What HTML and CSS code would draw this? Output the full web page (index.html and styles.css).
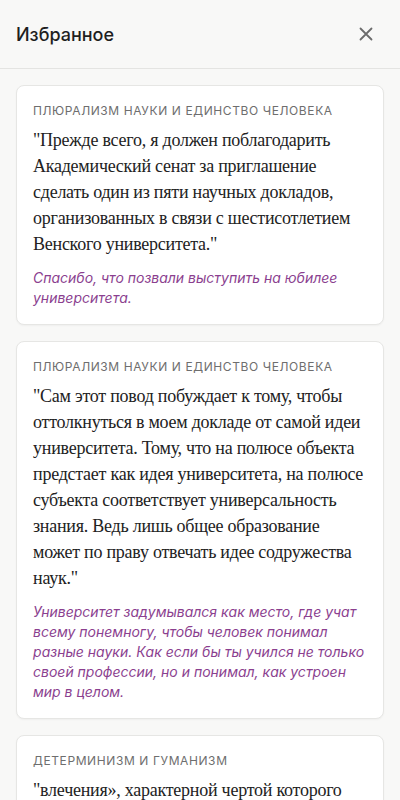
FILE: index.html
```html
<!DOCTYPE html>
<html lang="ru">
<head>
<meta charset="utf-8">
<title>Избранное</title>
<link rel="stylesheet" href="styles.css">
</head>
<body>
<div class="panel">
  <header class="header">
    <h1 class="title">Избранное</h1>
    <button class="close" aria-label="Закрыть">
      <svg width="14" height="14" viewBox="0 0 14 14"><path d="M1.5 1.5 L12.5 12.5 M12.5 1.5 L1.5 12.5" stroke="#6b6b6b" stroke-width="1.8" stroke-linecap="round" fill="none"/></svg>
    </button>
  </header>
  <main class="list">
    <article class="card">
      <div class="topic">Плюрализм науки и единство человека</div>
      <p class="quote">"Прежде всего, я должен поблагодарить Академический сенат за приглашение сделать один из пяти научных докладов, организованных в связи с шестисотлетием Венского университета."</p>
      <p class="note">Спасибо, что позвали выступить на юбилее университета.</p>
    </article>
    <article class="card">
      <div class="topic">Плюрализм науки и единство человека</div>
      <p class="quote">"Сам этот повод побуждает к тому, чтобы оттолкнуться в моем докладе от самой идеи университета. Тому, что на полюсе объекта предстает как идея университета, на полюсе субъекта соответствует универсальность знания. Ведь лишь общее образование может по праву отвечать идее содружества наук."</p>
      <p class="note">Университет задумывался как место, где учат всему понемногу, чтобы человек понимал разные науки. Как если бы ты учился не только своей профессии, но и понимал, как устроен мир в целом.</p>
    </article>
    <article class="card">
      <div class="topic">Детерминизм и гуманизм</div>
      <p class="quote">"влечения», характерной чертой которого является то, что оно толкает человека к определенной цели."</p>
    </article>
  </main>
</div>
</body>
</html>
```
FILE: styles.css
```css
* { box-sizing: border-box; }
html, body { margin: 0; padding: 0; }
body {
  background: #f8f8f7;
  font-family: Inter, "Noto Sans", sans-serif;
  color: #222;
  height: 800px;
  overflow: hidden;
}
.panel { display: flex; flex-direction: column; }
.header {
  height: 69px;
  display: flex;
  align-items: center;
  justify-content: space-between;
  padding: 0 16px;
  border-bottom: 1px solid #e4e4e2;
}
.title {
  margin: 0;
  font-size: 18px;
  font-weight: 500;
  color: #1f1f1f;
}
.close {
  border: 0;
  background: none;
  padding: 0;
  width: 24px;
  height: 24px;
  display: flex;
  align-items: center;
  justify-content: center;
  margin-right: 6px;
}
.list {
  display: flex;
  flex-direction: column;
  gap: 16px;
  padding: 16px;
}
.card {
  background: #fff;
  border: 1px solid #e6e6e4;
  border-radius: 8px;
  box-shadow: 0 1px 2px rgba(0,0,0,0.04);
  padding: 17px 16px 16px;
}
.topic {
  font-size: 12px;
  line-height: 16px;
  letter-spacing: 0.6px;
  text-transform: uppercase;
  color: #6e6e6e;
}
.quote {
  margin: 8px 0 0;
  font-family: "Liberation Serif", serif;
  font-size: 18px;
  letter-spacing: -0.25px;
  line-height: 26px;
  color: #222;
}
.note {
  margin: 11px 0 0;
  font-size: 14px;
  line-height: 20px;
  font-style: italic;
  color: #8b3f8f;
}
```
